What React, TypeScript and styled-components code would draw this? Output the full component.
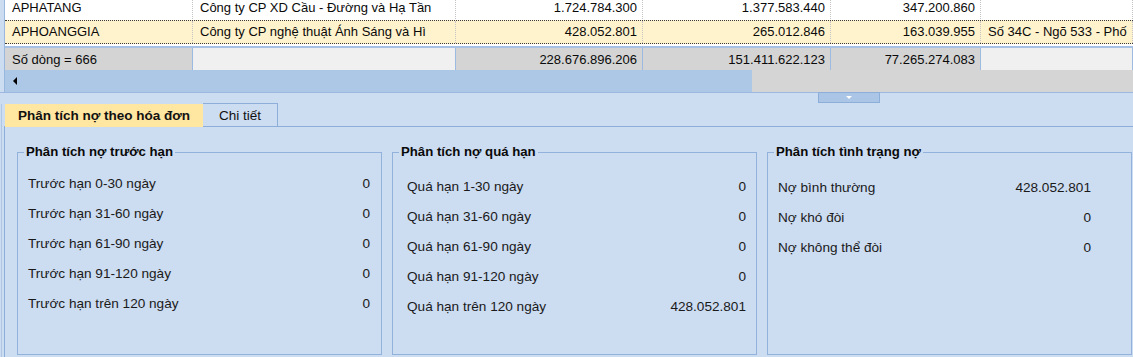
import React from 'react';
import styled, { createGlobalStyle } from 'styled-components';

const GlobalStyle = createGlobalStyle`
  html, body { margin: 0; padding: 0; background: #CCDCF1; }
  body {
    font-family: "Liberation Sans", Arial, sans-serif;
    font-size: 13px;
    color: #111111;
    overflow: hidden;
  }
  * { box-sizing: border-box; }
`;

const COLS = '188px 263px 187px 188px 150px 1fr';

const Screen = styled.div`
  width: 1133px;
  height: 357px;
  display: flex;
  flex-direction: column;
  background: #CCDCF1;
  overflow: hidden;
`;

const GridArea = styled.div`
  margin-left: 4px;
  border-left: 1px solid #9AB7DE;
  display: flex;
  flex-direction: column;
`;

const DataTable = styled.div`
  margin-top: -4px;
  background: #ffffff;
  padding-bottom: 2px;
  display: flex;
  flex-direction: column;
`;

const DataRow = styled.div<{ $selected?: boolean }>`
  display: grid;
  grid-template-columns: ${COLS};
  height: 24px;
  background: ${(p) => (p.$selected ? '#FFF3CD' : '#ffffff')};
  border-top: 1px dotted ${(p) => (p.$selected ? '#3a3a3a' : 'transparent')};
  border-bottom: 1px dotted ${(p) => (p.$selected ? '#3a3a3a' : 'transparent')};
`;

const Cell = styled.div<{ $right?: boolean }>`
  display: flex;
  align-items: center;
  justify-content: ${(p) => (p.$right ? 'flex-end' : 'flex-start')};
  padding: 0 5px 0 7px;
  border-right: 1px dotted #c4c4c4;
  white-space: nowrap;
  overflow: hidden;
  line-height: 16px;
  color: #0a0a0a;
`;

const FooterRow = styled.div`
  display: grid;
  grid-template-columns: ${COLS};
  height: 24px;
  border-top: 2px solid #A7C1E4;
`;

const FooterCell = styled.div<{ $light?: boolean; $right?: boolean }>`
  display: flex;
  align-items: center;
  justify-content: ${(p) => (p.$right ? 'flex-end' : 'flex-start')};
  padding: 0 5px 0 6px;
  background: ${(p) => (p.$light ? '#F0F0F0' : '#D4D4D4')};
  border-right: 1px solid #9DBAE0;
  border-left: 1px solid ${(p) => (p.$light ? '#F0F0F0' : '#D4D4D4')};
  white-space: nowrap;
  overflow: hidden;
  color: #0a0a0a;
`;

const HScroll = styled.div`
  display: flex;
  height: 22px;
`;

const ScrollTrack = styled.div`
  width: 747px;
  background: #ADC7E6;
  display: flex;
  align-items: center;
  padding-left: 8px;
`;

const ArrowLeft = styled.span`
  width: 0;
  height: 0;
  border-top: 4px solid transparent;
  border-bottom: 4px solid transparent;
  border-right: 4px solid #000;
`;

const ScrollThumb = styled.div`
  flex: 1;
  background: #D5D5D5;
`;

const LowerArea = styled.div`
  flex: 1;
  display: flex;
  flex-direction: column;
  border-top: 1px solid #9DB8DE;
  min-height: 0;
`;

const SplitterStrip = styled.div`
  height: 11px;
  display: flex;
  align-items: flex-start;
`;

const SplitterButton = styled.div`
  margin-left: 818px;
  margin-top: -1px;
  width: 62px;
  height: 11px;
  background: #AAC5E6;
  border: 1px solid #8EAEDA;
  display: flex;
  justify-content: center;
  padding-top: 3px;
`;

const ArrowDown = styled.span`
  width: 0;
  height: 0;
  border-left: 3px solid transparent;
  border-right: 3px solid transparent;
  border-top: 3px solid #ffffff;
`;

const TabControl = styled.div`
  flex: 1;
  display: flex;
  flex-direction: column;
  margin-left: 1px;
  border-left: 1px solid #AFC6E5;
  padding-left: 2px;
  min-height: 0;
`;

const TabStrip = styled.div`
  display: flex;
  align-items: flex-end;
  height: 23px;
  border-bottom: 1px solid #8EAEDA;
  padding-left: 1px;
`;

const Tab = styled.div<{ $active?: boolean }>`
  height: 23px;
  margin-bottom: ${(p) => (p.$active ? '-1px' : '0')};
  width: ${(p) => (p.$active ? '198px' : '75px')};
  display: flex;
  align-items: center;
  justify-content: center;
  background: ${(p) => (p.$active ? '#FFE6A1' : '#CCDCF1')};
  border: 1px solid ${(p) => (p.$active ? '#FFE6A1' : '#8EAEDA')};
  border-bottom: ${(p) => (p.$active ? '1px solid #FFE6A1' : 'none')};
  border-left: ${(p) => (p.$active ? '1px solid #FFE6A1' : 'none')};
  font-weight: ${(p) => (p.$active ? 'bold' : 'normal')};
  font-size: 13.5px;
  color: #111;
  white-space: nowrap;
`;

const TabPage = styled.div`
  flex: 1;
  border-left: 1px solid #8EAEDA;
  padding: 17px 0 2px 12px;
  display: flex;
  gap: 10px;
  min-height: 0;
`;

const GroupBox = styled.fieldset`
  margin: 0;
  padding: 0;
  min-width: 0;
  width: 365px;
  flex: none;
  border: 1px solid #92B2DC;
`;

const GroupTitle = styled.legend`
  margin-left: 6px;
  padding: 0 2px;
  font-weight: bold;
  font-size: 13.2px;
  line-height: 16px;
  color: #0a0a0a;
`;

const GroupBody = styled.div<{ $pad: string }>`
  display: flex;
  flex-direction: column;
  padding: ${(p) => p.$pad};
`;

const InfoRow = styled.div`
  height: 30px;
  display: flex;
  align-items: center;
  justify-content: space-between;
  font-size: 13.6px;
  color: #1a1a1a;
  white-space: nowrap;
`;

type Row = { code: string; name: string; a: string; b: string; c: string; addr: string };

const rows: Row[] = [
  {
    code: 'APHATANG',
    name: 'Công ty CP XD Cầu - Đường và Hạ Tần',
    a: '1.724.784.300',
    b: '1.377.583.440',
    c: '347.200.860',
    addr: '',
  },
  {
    code: 'APHOANGGIA',
    name: 'Công ty CP nghệ thuật Ánh Sáng và Hì',
    a: '428.052.801',
    b: '265.012.846',
    c: '163.039.955',
    addr: 'Số 34C - Ngõ 533 - Phố',
  },
];

type Group = { title: string; pad: string; items: [string, string][] };

const groups: Group[] = [
  {
    title: 'Phân tích nợ trước hạn',
    pad: '8px 11px 0 10px',
    items: [
      ['Trước hạn 0-30 ngày', '0'],
      ['Trước hạn 31-60 ngày', '0'],
      ['Trước hạn 61-90 ngày', '0'],
      ['Trước hạn 91-120 ngày', '0'],
      ['Trước hạn trên 120 ngày', '0'],
    ],
  },
  {
    title: 'Phân tích nợ quá hạn',
    pad: '11px 10px 0 14px',
    items: [
      ['Quá hạn 1-30 ngày', '0'],
      ['Quá hạn 31-60 ngày', '0'],
      ['Quá hạn 61-90 ngày', '0'],
      ['Quá hạn 91-120 ngày', '0'],
      ['Quá hạn trên 120 ngày', '428.052.801'],
    ],
  },
  {
    title: 'Phân tích tình trạng nợ',
    pad: '12px 40px 0 10px',
    items: [
      ['Nợ bình thường', '428.052.801'],
      ['Nợ khó đòi', '0'],
      ['Nợ không thể đòi', '0'],
    ],
  },
];

export default function App() {
  return (
    <>
      <GlobalStyle />
      <Screen>
        <GridArea>
          <DataTable>
            {rows.map((r, i) => (
              <DataRow key={r.code} $selected={i === 1}>
                <Cell>{r.code}</Cell>
                <Cell>{r.name}</Cell>
                <Cell $right>{r.a}</Cell>
                <Cell $right>{r.b}</Cell>
                <Cell $right>{r.c}</Cell>
                <Cell>{r.addr}</Cell>
              </DataRow>
            ))}
          </DataTable>
          <FooterRow>
            <FooterCell>Số dòng = 666</FooterCell>
            <FooterCell $light />
            <FooterCell $right>228.676.896.206</FooterCell>
            <FooterCell $right>151.411.622.123</FooterCell>
            <FooterCell $right>77.265.274.083</FooterCell>
            <FooterCell $light />
          </FooterRow>
          <HScroll>
            <ScrollTrack>
              <ArrowLeft />
            </ScrollTrack>
            <ScrollThumb />
          </HScroll>
        </GridArea>
        <LowerArea>
          <SplitterStrip>
            <SplitterButton>
              <ArrowDown />
            </SplitterButton>
          </SplitterStrip>
          <TabControl>
            <TabStrip>
              <Tab $active>Phân tích nợ theo hóa đơn</Tab>
              <Tab>Chi tiết</Tab>
            </TabStrip>
            <TabPage>
              {groups.map((g) => (
                <GroupBox key={g.title}>
                  <GroupTitle>{g.title}</GroupTitle>
                  <GroupBody $pad={g.pad}>
                    {g.items.map(([label, value]) => (
                      <InfoRow key={label}>
                        <span>{label}</span>
                        <span>{value}</span>
                      </InfoRow>
                    ))}
                  </GroupBody>
                </GroupBox>
              ))}
            </TabPage>
          </TabControl>
        </LowerArea>
      </Screen>
    </>
  );
}
